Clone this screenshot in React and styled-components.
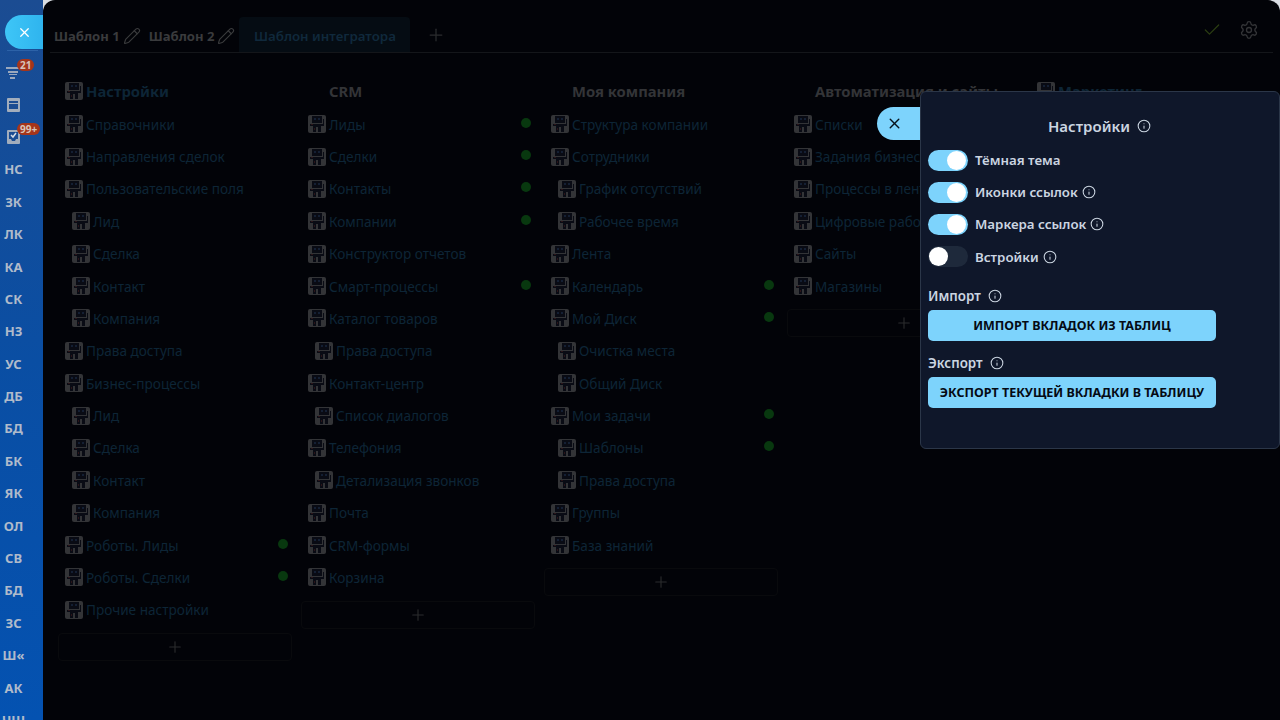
import styled, { createGlobalStyle } from 'styled-components'
import { X, Pencil, Plus, Check, Settings, Info } from 'lucide-react'

const GlobalStyle = createGlobalStyle`
    html, body {
        margin: 0;
        height: 100%;
        background: #d9dde3;
        overflow: hidden;
    }
    body, button {
        font-family: 'Noto Sans', 'Open Sans', sans-serif;
    }
`;

const Shell = styled.div`
    display: flex;
    width: 1280px;
    height: 720px;
    overflow: hidden;
`;

const Sidebar = styled.aside`
    width: 43px;
    flex-shrink: 0;
    height: 720px;
    overflow: hidden;
    background: linear-gradient(180deg, #1b4c92 0%, #0a4ea3 50%, #0452b1 100%);
    padding-top: 15px;
    box-sizing: border-box;
`;

const SideClose = styled.div`
    width: 38px;
    height: 34px;
    margin-left: 5px;
    border-radius: 17px 0 0 17px;
    background: linear-gradient(90deg, #3ec6f7, #2fb4ee);
    display: flex;
    align-items: center;
    justify-content: center;
    color: #fff;
`;

const SideDivider = styled.div`
    height: 1px;
    margin: 1px 5px 6px 7px;
    background: #2c62a8;
`;

const SideItem = styled.div`
    position: relative;
    height: 32.4px;
    margin-top: ${p => (p.$lift ? '-1px' : '0')};
    display: flex;
    align-items: center;
    justify-content: ${p => (p.$icon ? 'flex-start' : 'center')};
    padding-left: ${p => (p.$icon ? '6px' : '0')};
    padding-right: ${p => (p.$icon ? '0' : '16px')};
    color: #b0bbcb;
    font-size: 13px;
    font-weight: 700;
    box-sizing: border-box;
`;

const SideGlyph = styled.svg`
    margin-left: 1px;
`;

const Badge = styled.span`
    position: absolute;
    top: 2px;
    left: 17px;
    padding: 0 3px;
    min-width: 10px;
    text-align: center;
    height: 12px;
    line-height: 12px;
    border-radius: 6px;
    background: #a5351a;
    color: #d8c4b8;
    font-size: 10px;
    font-weight: 700;
`;

const Main = styled.main`
    position: relative;
    flex: 1;
    height: 720px;
    background: #020308;
    border-radius: 12px 12px 0 0;
    padding: 0 7px;
    box-sizing: border-box;
    overflow: hidden;
`;

const TopBar = styled.header`
    display: flex;
    align-items: flex-end;
    height: 53px;
    box-sizing: border-box;
    border-bottom: 1px solid #14161a;
`;

const Tab = styled.div`
    display: flex;
    align-items: center;
    gap: 3px;
    height: 35px;
    padding: 3px 0 0 4px;
    margin-right: 4px;
    box-sizing: border-box;
    color: #3a3b3d;
    font-size: 13.1px;
    font-weight: 700;
    svg {
        color: #3a3b3d;
    }
`;

const ActiveTab = styled.div`
    display: flex;
    align-items: center;
    justify-content: center;
    width: 171px;
    height: 35px;
    padding-top: 3px;
    box-sizing: border-box;
    background: #050c13;
    border-radius: 4px 4px 0 0;
    color: #10293c;
    font-size: 13.3px;
    font-weight: 600;
`;

const AddTab = styled.div`
    margin: 0 0 7px 16px;
    height: 20px;
    color: #2b2c2e;
`;

const TopActions = styled.div`
    margin-left: auto;
    display: flex;
    align-items: center;
    gap: 17px;
    padding: 0 14px 12px 0;
    color: #333437;
`;

const OkIcon = styled(Check)`
    color: #2b3d12;
`;

const Board = styled.div`
    display: grid;
    grid-template-columns: repeat(5, 234px);
    gap: 9px;
    padding: 21px 0 0 8px;
    align-items: start;
`;

const Column = styled.section`
    display: flex;
    flex-direction: column;
`;

const Row = styled.div`
    display: flex;
    align-items: center;
    height: ${p => (p.$head ? '34px' : '32.38px')};
    padding-left: ${p => (p.$nested ? '14px' : '7px')};
    padding-right: 4px;
    gap: 3px;
    font-size: ${p => (p.$head ? '14.8px' : '13.6px')};
    font-weight: ${p => (p.$head ? 700 : 400)};
    color: ${p => (p.$grey ? '#333437' : '#0d2536')};
    white-space: nowrap;
`;

const IconBox = styled.svg`
    width: 18px;
    height: 18px;
    flex-shrink: 0;
    visibility: ${p => (p.$hidden ? 'hidden' : 'visible')};
`;

const Marker = styled.span`
    margin-left: auto;
    width: 10px;
    height: 10px;
    border-radius: 50%;
    background: #08380f;
    margin-top: -3px;
`;

const AddBox = styled.div`
    margin-top: 7px;
    height: 28px;
    border: 1px solid #090a0d;
    border-radius: 4px;
    display: flex;
    align-items: center;
    justify-content: center;
    color: #2b2c2e;
    box-sizing: border-box;
`;

const FloatClose = styled.div`
    position: absolute;
    left: 834px;
    top: 107px;
    width: 60px;
    height: 33px;
    padding-left: 9px;
    box-sizing: border-box;
    border-radius: 17px 0 0 17px;
    background: #7dd3fc;
    display: flex;
    align-items: center;
    color: #06121c;
`;

const Panel = styled.div`
    position: absolute;
    right: 0;
    top: 91px;
    width: 360px;
    height: 358px;
    box-sizing: border-box;
    background: #0f172a;
    border: 1px solid #2b3648;
    border-radius: 6px;
    padding: 21px 7px 0;
    color: #cbd5e1;
`;

const PanelTitle = styled.div`
    display: flex;
    align-items: center;
    justify-content: center;
    gap: 7px;
    height: 26px;
    margin-bottom: 5px;
    padding-right: 1px;
    font-size: 15px;
    font-weight: 600;
    color: #cbd5e1;
`;

const ToggleRow = styled.div`
    display: flex;
    align-items: center;
    height: 32.2px;
    gap: 7px;
    font-size: 13.3px;
    font-weight: 600;
    color: #cbd5e1;
`;

const RowInfo = styled.span`
    display: flex;
    margin-left: -3px;
`;

const Toggle = styled.span`
    position: relative;
    width: 40px;
    height: 21px;
    border-radius: 11px;
    background: ${p => (p.$on ? '#7dd3fc' : '#1e293b')};
`;

const Knob = styled.span`
    position: absolute;
    top: 1px;
    left: ${p => (p.$on ? '19px' : '1px')};
    width: 19px;
    height: 19px;
    border-radius: 50%;
    background: #fff;
`;

const SectionLabel = styled.div`
    display: flex;
    align-items: center;
    gap: 7px;
    height: 20px;
    margin-bottom: 4px;
    font-size: 13.4px;
    font-weight: 600;
    color: #cbd5e1;
`;

const ImportLabel = styled(SectionLabel)`
    margin-top: 13.4px;
`;

const ExportLabel = styled(SectionLabel)`
    margin-top: 12px;
`;

const ActionButton = styled.button`
    display: block;
    width: 288px;
    height: 31px;
    padding: 0;
    border: 0;
    border-radius: 5px;
    background: #7dd3fc;
    color: #050a14;
    font-size: 12.5px;
    font-weight: 700;
`;

const RowIcon = ({ hidden }) => (
  <IconBox $hidden={hidden} viewBox="0 0 18 18">
    <rect width="18" height="18" rx="2" fill="#333437" />
    <path d="M4 1h10v7H4z" fill="#090b14" />
    <path d="M6 3h2v2H6zM10 3h2v2h-2z" fill="#141f33" />
    <path d="M15 4h1v7h-3v6H5v-6H2V9h13z" fill="#090b14" />
    <path d="M8 12h2v5H8z" fill="#333437" />
    <path d="M3 9h2v1H3zM6 13h1v2H6z" fill="#2b1418" />
  </IconBox>
)

const InfoIcon = ({ size = 14 }) => <Info size={size} strokeWidth={1.8} />

const SideIcon = ({ kind }) => {
  if (kind === 'filter') {
    return (
      <svg width="14" height="13" viewBox="0 0 14 13" fill="#9aa8bd">
        <rect x="0" y="0" width="13" height="2" />
        <rect x="2" y="4" width="10" height="2" />
        <rect x="4" y="10" width="5" height="2" />
        <rect x="3" y="7" width="8" height="1" />
      </svg>
    )
  }
  if (kind === 'page') {
    return (
      <SideGlyph width="14" height="14" viewBox="0 0 14 14">
        <rect width="13" height="14" rx="1" fill="#a2adbc" />
        <rect x="2" y="3" width="9" height="8" fill="#1b4c92" />
        <rect x="2" y="5" width="9" height="1" fill="#a2adbc" />
      </SideGlyph>
    )
  }
  return (
    <SideGlyph width="14" height="14" viewBox="0 0 14 14">
      <rect width="13" height="14" rx="1" fill="#a2adbc" />
      <path d="M2 2h9v7H9l-1 2H5L4 9H2z" fill="#1b4c92" />
      <path d="M4 5l2 2 3-4" fill="none" stroke="#d7dde6" strokeWidth="1.5" />
    </SideGlyph>
  )
}

const sideLabels = ['НС', 'ЗК', 'ЛК', 'КА', 'СК', 'НЗ', 'УС', 'ДБ', 'БД', 'БК', 'ЯК', 'ОЛ', 'СВ', 'БД', 'ЗС', 'Ш«', 'АК', 'ЧШ']

const columns = [
  {
    head: 'Настройки',
    items: [
      ['Справочники'], ['Направления сделок'], ['Пользовательские поля'],
      ['Лид', 'n'], ['Сделка', 'n'], ['Контакт', 'n'], ['Компания', 'n'],
      ['Права доступа'], ['Бизнес-процессы'],
      ['Лид', 'n'], ['Сделка', 'n'], ['Контакт', 'n'], ['Компания', 'n'],
      ['Роботы. Лиды', 'm'], ['Роботы. Сделки', 'm'], ['Прочие настройки'],
    ],
  },
  {
    head: 'CRM',
    grey: true,
    items: [
      ['Лиды', 'm'], ['Сделки', 'm'], ['Контакты', 'm'], ['Компании', 'm'],
      ['Конструктор отчетов'], ['Смарт-процессы', 'm'], ['Каталог товаров'],
      ['Права доступа', 'n'], ['Контакт-центр'], ['Список диалогов', 'n'],
      ['Телефония'], ['Детализация звонков', 'n'], ['Почта'], ['CRM-формы'], ['Корзина'],
    ],
  },
  {
    head: 'Моя компания',
    grey: true,
    items: [
      ['Структура компании'], ['Сотрудники'], ['График отсутствий', 'n'], ['Рабочее время', 'n'],
      ['Лента'], ['Календарь', 'm'], ['Мой Диск', 'm'], ['Очистка места', 'n'], ['Общий Диск', 'n'],
      ['Мои задачи', 'm'], ['Шаблоны', 'nm'], ['Права доступа', 'n'], ['Группы'], ['База знаний'],
    ],
  },
  {
    head: 'Автоматизация и сайты',
    grey: true,
    items: [
      ['Списки'], ['Задания бизнес-процессов'], ['Процессы в ленте'],
      ['Цифровые рабочие места'], ['Сайты'], ['Магазины'],
    ],
  },
]

const Toggler = ({ on, label, info }) => (
  <ToggleRow>
    <Toggle $on={on}><Knob $on={on} /></Toggle>
    {label}
    {info && <RowInfo><InfoIcon /></RowInfo>}
  </ToggleRow>
)

const App = () => {
  return (
    <Shell>
      <GlobalStyle />
      <Sidebar>
        <SideClose><X size={15} strokeWidth={2} /></SideClose>
        <SideDivider />
        <SideItem $icon><SideIcon kind="filter" /><Badge>21</Badge></SideItem>
        <SideItem $icon $lift><SideIcon kind="page" /></SideItem>
        <SideItem $icon><SideIcon kind="task" /><Badge>99+</Badge></SideItem>
        {sideLabels.map((label, i) => <SideItem key={i}>{label}</SideItem>)}
      </Sidebar>
      <Main>
        <TopBar>
          <Tab>Шаблон 1 <Pencil size={18} strokeWidth={1.5} /></Tab>
          <Tab>Шаблон 2 <Pencil size={18} strokeWidth={1.5} /></Tab>
          <ActiveTab>Шаблон интегратора</ActiveTab>
          <AddTab><Plus size={20} strokeWidth={1.5} /></AddTab>
          <TopActions>
            <OkIcon size={20} strokeWidth={1.5} />
            <Settings size={20} strokeWidth={1.6} />
          </TopActions>
        </TopBar>
        <Board>
          {columns.map(col => (
            <Column key={col.head}>
              <Row $head $grey={col.grey}>
                <RowIcon hidden={col.grey} />
                {col.head}
              </Row>
              {col.items.map(([name, flags = ''], i) => (
                <Row key={i} $nested={flags.includes('n')}>
                  <RowIcon />
                  {name}
                  {flags.includes('m') && <Marker />}
                </Row>
              ))}
              <AddBox><Plus size={18} strokeWidth={1.5} /></AddBox>
            </Column>
          ))}
          <Column>
            <Row $head>
              <RowIcon />
              Маркетинг
            </Row>
          </Column>
        </Board>
        <FloatClose><X size={17} strokeWidth={2} /></FloatClose>
        <Panel>
          <PanelTitle>Настройки <InfoIcon /></PanelTitle>
          <Toggler on label="Тёмная тема" />
          <Toggler on label="Иконки ссылок" info />
          <Toggler on label="Маркера ссылок" info />
          <Toggler label="Встройки" info />
          <ImportLabel>Импорт <InfoIcon /></ImportLabel>
          <ActionButton>ИМПОРТ ВКЛАДОК ИЗ ТАБЛИЦ</ActionButton>
          <ExportLabel>Экспорт <InfoIcon /></ExportLabel>
          <ActionButton>ЭКСПОРТ ТЕКУЩЕЙ ВКЛАДКИ В ТАБЛИЦУ</ActionButton>
        </Panel>
      </Main>
    </Shell>
  )
}

export default App
